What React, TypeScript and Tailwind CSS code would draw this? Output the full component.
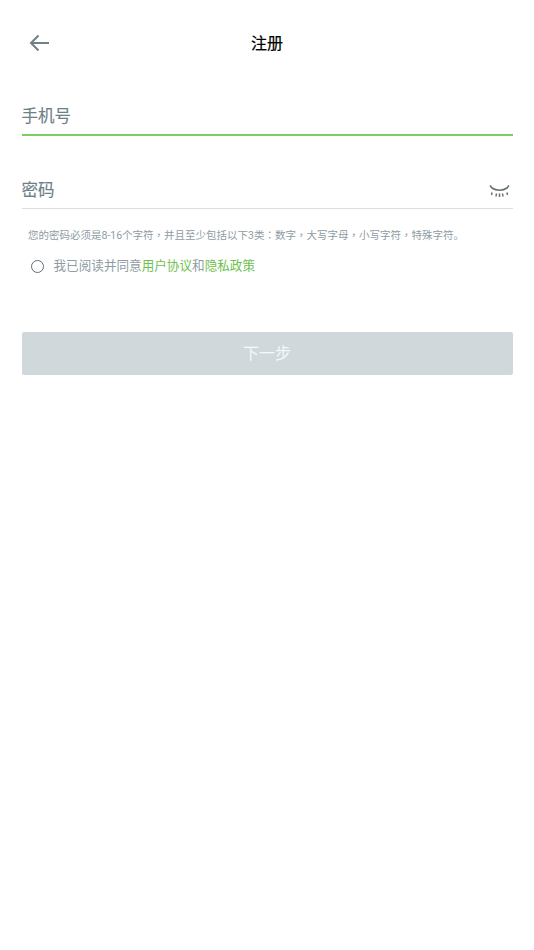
export default function App() {
  const font = { fontFamily: '"Roboto", "Noto Sans CJK SC", sans-serif' };
  const tc = { fontFamily: '"Noto Sans CJK TC"' };
  return (
    <div style={font} className="w-[534px] h-[950px] bg-white flex flex-col">
      <div className="h-[87px] flex items-center justify-center relative">
        <svg className="absolute left-[29px] top-[34px]" width="21" height="18" viewBox="0 0 21 18" fill="none" stroke="#6f8087" strokeWidth="2">
          <path d="M20 9H2M9.5 1.5L2 9l7.5 7.5" />
        </svg>
        <span className="text-[16px] text-black [-webkit-text-stroke:0.2px_black]">注册</span>
      </div>
      <div className="mx-[21.5px] h-[48.500px] border-b-2 border-[#7ccd62] flex items-center pt-[15px]">
        <span className="text-[16.500px] text-[#6e7f87] [-webkit-text-stroke:0.15px_#6e7f87]">手机号</span>
      </div>
      <div className="mx-[21.5px] mt-[26.500px] h-[47px] border-b border-[#dcdfe0] flex items-center justify-between pt-[13px]">
        <span className="text-[16.500px] text-[#6e7f87] [-webkit-text-stroke:0.15px_#6e7f87]">密码</span>
        <svg className="mr-[3px]" width="21" height="13" viewBox="0 0 21 13" fill="none" stroke="#666f73">
          <path d="M1 .5l2 2.500C7 6 14 6 18 3l2-2.500" strokeWidth="1.600" />
          <path d="M3 7.500l-.5 2.500M7.500 8.500l-.5 3M10.500 8.500v3.500M13.500 8.500l.5 3M18 7.500l.5 2.500" strokeWidth="1.500" />
        </svg>
      </div>
      <div className="ml-[28px] mt-[18px] h-[16px] text-[10.500px] leading-[16px] text-[#8e9ca3] whitespace-nowrap overflow-hidden">
        您的密码必须是8-16个字符<span style={tc}>，</span>并且至少包括以下3类<span style={tc}>：</span>数字<span style={tc}>，</span>大写字母<span style={tc}>，</span>小写字符<span style={tc}>，</span>特殊字符。
      </div>
      <div className="ml-[31px] mt-[13px] flex items-center h-[20px]">
        <div className="w-[13px] h-[13px] rounded-full border-[1.500px] border-[#5d6d74]" />
        <span className="ml-[9.500px] text-[12.600px] leading-[20px] text-[#8e9ca3]">
          我已阅读并同意<span className="text-[#6fbf4f]">用户协议</span>和<span className="text-[#6fbf4f]">隐私政策</span>
        </span>
      </div>
      <div className="mx-[21.5px] mt-[56px] h-[43px] bg-[#d0d8dc] rounded-[2px] flex items-center justify-center">
        <span className="text-[16px] text-white/80">下一步</span>
      </div>
    </div>
  );
}
